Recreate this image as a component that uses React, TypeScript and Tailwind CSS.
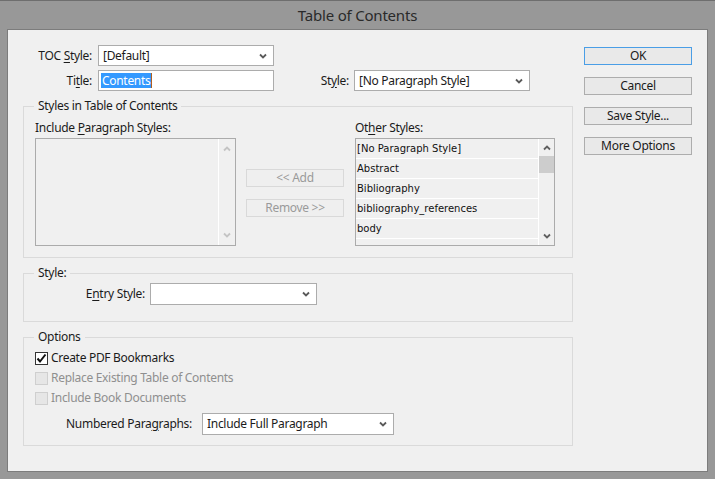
import React from "react";

const Chevron = ({ up = false, color = "#5a5a5a" }: { up?: boolean; color?: string }) => (
  <svg width="8" height="6" viewBox="0 0 8 6" className="shrink-0">
    <polyline
      points={up ? "1,4.5 4,1.5 7,4.5" : "1,1.5 4,4.5 7,1.5"}
      fill="none"
      stroke={color}
      strokeWidth="1.8"
    />
  </svg>
);

const Select = ({ w, h = "h-[21px]", text }: { w: string; h?: string; text?: string }) => (
  <div className={`${w} ${h} bg-white border border-[#acacac] flex items-center pl-[4px] pr-[6px] shrink-0`}>
    <span className="text-[#1b1b1b]">{text}</span>
    <span className="ml-auto">
      <Chevron />
    </span>
  </div>
);

const U = ({ children }: { children: React.ReactNode }) => <span className="underline underline-offset-2">{children}</span>;

const Btn = ({ children, ok = false, disabled = false }: { children: React.ReactNode; ok?: boolean; disabled?: boolean }) => (
  <div
    className={`h-[18px] flex items-center justify-center border ${
      ok ? "border-[#4a9ee6] bg-[#e9e9e9]" : disabled ? "border-[#d9d9d9] bg-[#efefef] text-[#9a9a9a]" : "border-[#adadad] bg-[#e9e9e9]"
    }`}
  >
    {children}
  </div>
);

const Check = ({ checked = false, disabled = false }: { checked?: boolean; disabled?: boolean }) => (
  <div
    className={`w-[13px] h-[13px] border flex items-center justify-center shrink-0 ${
      disabled ? "border-[#cfcfcf] bg-[#e6e6e6]" : "border-[#333333] bg-white"
    }`}
  >
    {checked && (
      <svg width="11" height="11" viewBox="0 0 11 11">
        <path d="M1.5 5.5 L4 8.5 L9.5 1.5" fill="none" stroke="#111" strokeWidth="2" />
      </svg>
    )}
  </div>
);

const Legend = ({ children }: { children: React.ReactNode }) => (
  <legend className="ml-[10px] px-[4px] leading-[16px] text-[#1b1b1b]">{children}</legend>
);

export default function App() {
  const items = ["[No Paragraph Style]", "Abstract", "Bibliography", "bibliography_references", "body"];
  return (
    <div
      className="w-[715px] h-[479px] bg-[#989898] border-t border-[#6e6e6e] flex flex-col px-[7px] pb-[7px] text-[12px] tracking-[-0.3px] text-[#1b1b1b]"
      style={{ fontFamily: '"Noto Sans", "Open Sans", sans-serif' }}
    >
      <div className="h-[28px] flex items-center justify-center text-[15px] tracking-[-0.2px] text-[#2a2a2a]">Table of Contents</div>
      <div className="flex-1 border border-[#7c7c7c] bg-[#f0f0f0] flex">
        {/* left column */}
        <div className="ml-[15px] w-[550px] pt-[15px] flex flex-col">
          <div className="flex items-center h-[21px]">
            <div className="w-[75px] text-right pr-[6px]">
              TOC <U>S</U>tyle:
            </div>
            <Select w="w-[176px]" text="[Default]" />
          </div>
          <div className="flex items-center h-[21px] mt-[4px]">
            <div className="w-[75px] text-right pr-[6px]">
              Ti<U>t</U>le:
            </div>
            <div className="w-[176px] h-[21px] bg-white border border-[#acacac] flex items-center pl-[2px]">
              <span className="bg-[#3399ff] text-white leading-[15px] px-[1px]">Contents</span>
              <span className="w-[1px] h-[15px] bg-[#b06020]"></span>
            </div>
            <div className="w-[80px] text-right pr-[5px]">
              St<U>y</U>le:
            </div>
            <Select w="w-[176px]" text="[No Paragraph Style]" />
          </div>

          {/* Group 1 */}
          <fieldset className="mt-[7px] border border-[#dadada]">
            <Legend>Styles in Table of Contents</Legend>
            <div className="flex pl-[11px] pb-[11px]">
              <div className="flex flex-col">
                <div className="mt-[6px] h-[16px] leading-[16px] mb-[2px]">
                  Include <U>P</U>aragraph Styles:
                </div>
                <div className="w-[201px] h-[108px] border border-[#ababab] flex">
                  <div className="flex-1 border-r border-white"></div>
                  <div className="w-[16px] flex flex-col items-center justify-between py-[7px]">
                    <Chevron up color="#c4c4c4" />
                    <Chevron color="#c4c4c4" />
                  </div>
                </div>
              </div>
              <div className="ml-[10px] pt-[55px] w-[98px] flex flex-col gap-[12px]">
                <Btn disabled>&lt;&lt; Add</Btn>
                <Btn disabled>Remove &gt;&gt;</Btn>
              </div>
              <div className="ml-[11px] flex flex-col">
                <div className="mt-[6px] h-[16px] leading-[16px] mb-[2px]">
                  Ot<U>h</U>er Styles:
                </div>
                <div className="w-[200px] h-[108px] border border-[#ababab] flex">
                  <div className="flex-1 flex flex-col border-r border-white">
                    {items.map((t) => (
                      <div
                        key={t}
                        className="h-[20px] border-b border-white flex items-center pl-[1px] tracking-normal text-[#111]"
                        style={{ fontFamily: '"DejaVu Sans", "Liberation Sans", sans-serif', fontSize: "10px" }}
                      >
                        {t}
                      </div>
                    ))}
                  </div>
                  <div className="w-[15px] flex flex-col items-center">
                    <div className="h-[16px] flex items-center justify-center mt-[1px]">
                      <Chevron up color="#606060" />
                    </div>
                    <div className="w-[15px] h-[17px] bg-[#cdcdcd]"></div>
                    <div className="flex-1"></div>
                    <div className="h-[16px] flex items-center justify-center mb-[1px]">
                      <Chevron color="#606060" />
                    </div>
                  </div>
                </div>
              </div>
            </div>
          </fieldset>

          {/* Group 2 */}
          <fieldset className="mt-[7px] border border-[#dadada]">
            <Legend>Style:</Legend>
            <div className="flex items-center mt-[2px] pb-[16px]">
              <div className="w-[126px] text-right pr-[5px]">
                E<U>n</U>try Style:
              </div>
              <Select w="w-[167px]" h="h-[22px]" />
            </div>
          </fieldset>

          {/* Group 3 */}
          <fieldset className="mt-[7px] border border-[#dadada]">
            <Legend>Options</Legend>
            <div className="flex flex-col mt-[3px] pl-[11px] pb-[10px]">
              <div className="h-[20px] flex items-center gap-[3px]">
                <Check checked />
                <span>Create PDF Bookmarks</span>
              </div>
              <div className="h-[20px] flex items-center gap-[3px] text-[#8f8f8f]">
                <Check disabled />
                <span>Replace Existing Table of Contents</span>
              </div>
              <div className="h-[20px] flex items-center gap-[3px] text-[#8f8f8f]">
                <Check disabled />
                <span>Include Book Documents</span>
              </div>
              <div className="flex items-center mt-[5px] -ml-[11px]">
                <div className="w-[178px] text-right pr-[10px]">
                  Numbered Para<U>g</U>raphs:
                </div>
                <Select w="w-[192px]" h="h-[22px]" text="Include Full Paragraph" />
              </div>
            </div>
          </fieldset>
        </div>

        {/* right column */}
        <div className="ml-[11px] w-[108px] pt-[17px] flex flex-col gap-[12px]">
          <Btn ok>OK</Btn>
          <Btn>Cancel</Btn>
          <Btn>Save Style...</Btn>
          <Btn>More Options</Btn>
        </div>
      </div>
    </div>
  );
}
